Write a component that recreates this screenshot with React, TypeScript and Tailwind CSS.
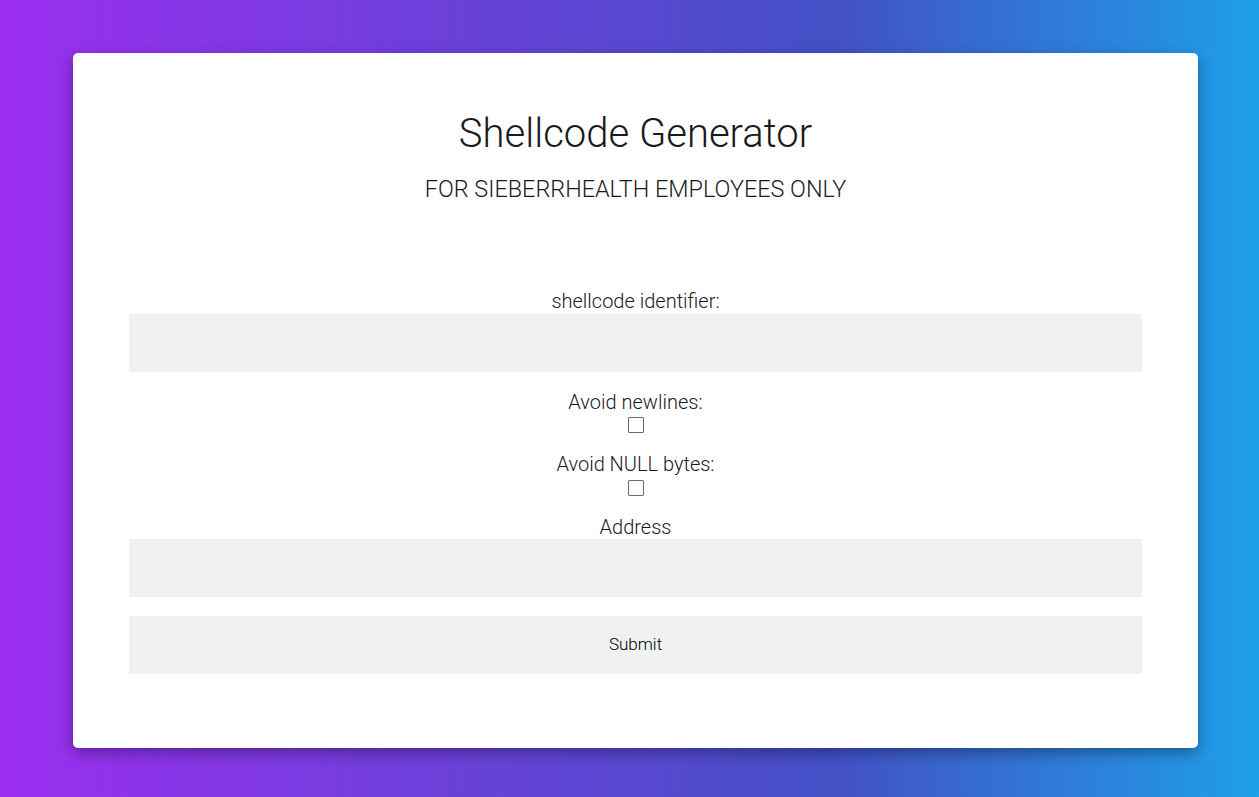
import React from 'react';

function Checkbox() {
  return (
    <span className="mt-[3px] mb-[20px] block w-4 h-4 border-[1.5px] border-[#6a6a6a] rounded-[1px] bg-white" />
  );
}

export default function App() {
  return (
    <div className="min-h-screen w-full bg-[linear-gradient(to_right,#9b2ef0,#4350c6_66%,#1e9fe8)] pt-[53px] pl-[73px] font-['Roboto',sans-serif] font-light text-[#1a1a1a]">
      <div className="w-[1125px] h-[695px] bg-white rounded-[5px] shadow-[0_5px_14px_rgba(0,0,0,0.35)] px-[56px] pt-[57px] flex flex-col items-center">
        <h1 className="text-[40px] leading-[47px] font-light">Shellcode Generator</h1>
        <p className="mt-[18px] text-[23.4px] leading-[28px] uppercase">For SieberrHealth employees only</p>

        <form className="mt-[87px] w-full flex flex-col items-center text-[20px] leading-[23.5px]">
          <label htmlFor="ident">shellcode identifier:</label>
          <input id="ident" type="text" className="w-full h-[58px] bg-[#f1f1f1] outline-none px-4" />

          <label className="mt-[19px]">Avoid newlines:</label>
          <Checkbox />

          <label>Avoid NULL bytes:</label>
          <Checkbox />

          <label htmlFor="addr">Address</label>
          <input id="addr" type="text" className="w-full h-[58px] bg-[#f1f1f1] outline-none px-4" />

          <button type="button" className="mt-[19px] w-full h-[58px] bg-[#f1f1f1] text-[17px] font-light text-black">
            Submit
          </button>
        </form>
      </div>
    </div>
  );
}
